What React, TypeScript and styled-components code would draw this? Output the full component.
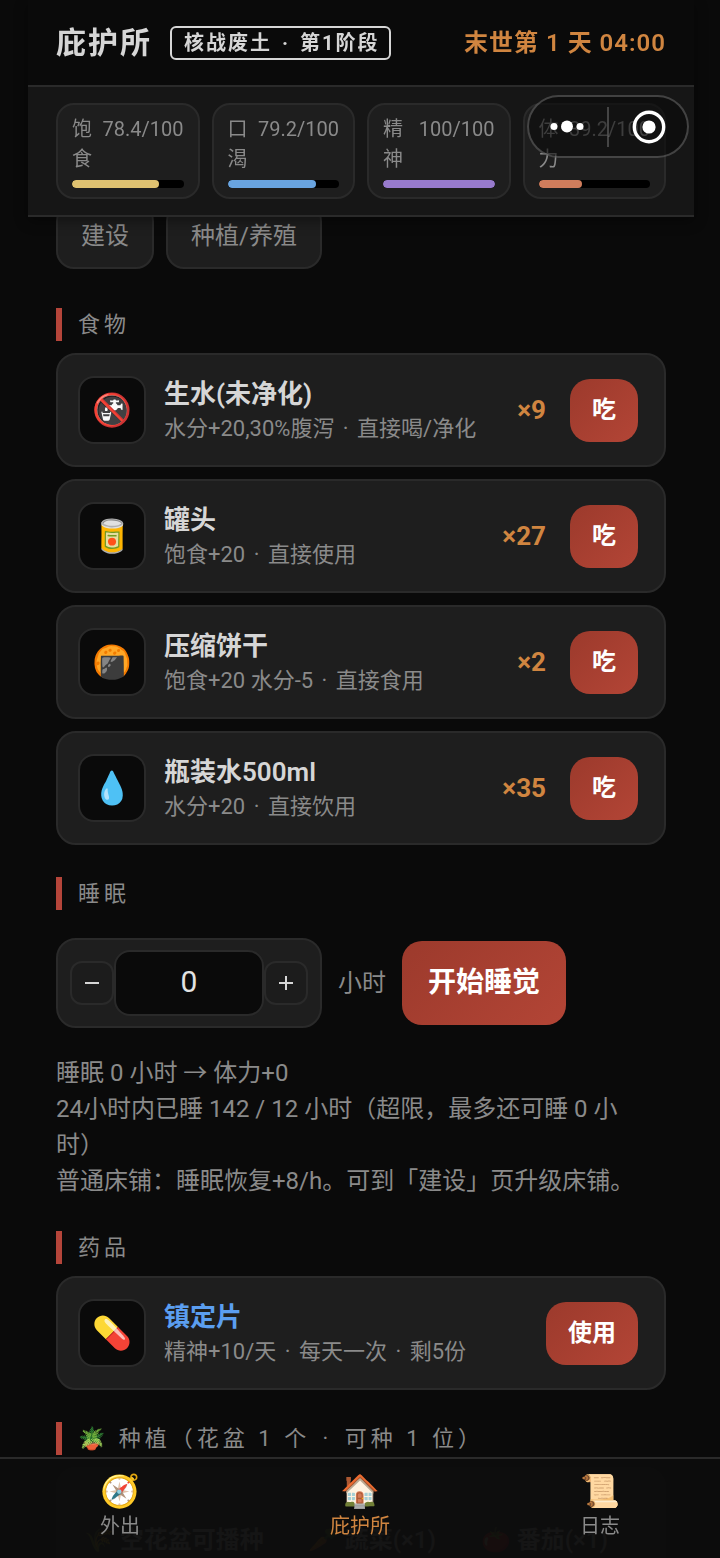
import React, { useState } from "react";
import styled, { createGlobalStyle } from "styled-components";

const GlobalStyle = createGlobalStyle`
    * {
        box-sizing: border-box;
    }

    body {
        margin: 0;
        background: #0a0a0a;
        color: #d6d6d6;
        font-family: Roboto, "Noto Sans CJK SC", "Noto Color Emoji", sans-serif;
        font-size: 24px;
        line-height: 1.5;
    }

    button, input {
        font-family: inherit;
        line-height: inherit;
        margin: 0;
    }
`;

const Screen = styled.div`
    position: relative;
    height: 100vh;
    overflow: hidden;
`;

const Page = styled.div`
    padding: 0 26px 0 28px;
`;

const Header = styled.header`
    position: sticky;
    top: 0;
    z-index: 2;
    background: #0a0a0a;
    box-shadow: 0 4px 12px rgba(0, 0, 0, 0.4);
`;

const TitleBar = styled.div`
    display: flex;
    align-items: center;
    height: 85px;
    padding: 0 28px;
`;

const Title = styled.h1`
    margin: 0;
    font-size: 30px;
    line-height: 40px;
    font-weight: 700;
    letter-spacing: 2px;
`;

const StageBadge = styled.span`
    margin-left: 18px;
    padding: 0 10px 0 12px;
    border: 2px solid #d6d6d6;
    border-radius: 6px;
    font-size: 20px;
    line-height: 30px;
    font-weight: 700;
    letter-spacing: 2px;
`;

const Clock = styled.time`
    margin-left: auto;
    color: #d08540;
    font-size: 24px;
    font-weight: 600;
    letter-spacing: 1px;
`;

const Stats = styled.div`
    display: grid;
    grid-template-columns: repeat(4, 1fr);
    gap: 12px;
    padding: 16px 28px;
    background: #161616;
    border-top: 2px solid #2a2a2a;
    border-bottom: 2px solid #2a2a2a;
`;

const StatCard = styled.div`
    padding: 9px 14px;
    background: #1e1e1e;
    border: 2px solid #2a2a2a;
    border-radius: 18px;
`;

const StatText = styled.div`
    display: flex;
    justify-content: space-between;
    color: #8a8a8a;
    font-size: 20px;
    line-height: 30px;
`;

const StatValue = styled.span`
    white-space: nowrap;
`;

const Track = styled.div`
    height: 8px;
    margin-top: 6px;
    border-radius: 4px;
    background: #000;
    overflow: hidden;
`;

const Fill = styled.div<{ $color: string }>`
    height: 100%;
    border-radius: 4px;
    background: ${({ $color }) => $color};
`;

const Content = styled.main`
    padding: 0 28px;
`;

const Tabs = styled.div`
    display: flex;
    gap: 12px;
    margin: -14px 0 39px;
`;

const Tab = styled.button`
    height: 66px;
    padding: 0 23px;
    background: #1e1e1e;
    border: 2px solid #2a2a2a;
    border-radius: 18px;
    color: #8a8a8a;
    font-size: 24px;
`;

const SectionTitle = styled.h2`
    margin: 32px 0 12px;
    padding-left: 16px;
    border-left: 6px solid #b5453a;
    color: #8a8a8a;
    font-size: 22px;
    line-height: 33px;
    font-weight: 400;
    letter-spacing: 4px;
    white-space: nowrap;
`;

const Dot = styled.span`
    margin: 0 3px;
`;

const ItemList = styled.div`
    display: flex;
    flex-direction: column;
    gap: 12px;
`;

const ItemCard = styled.div`
    display: flex;
    align-items: center;
    padding: 20px 26px 20px 20px;
    background: #1e1e1e;
    border: 2px solid #2a2a2a;
    border-radius: 20px;
`;

const ItemIcon = styled.div`
    display: flex;
    align-items: center;
    justify-content: center;
    flex: none;
    width: 68px;
    height: 68px;
    margin-right: 18px;
    background: #0a0a0a;
    border: 2px solid #2a2a2a;
    border-radius: 16px;
    font-size: 32px;
    line-height: 38px;
`;

const ItemInfo = styled.div`
    flex: 1;
    min-width: 0;
`;

const ItemName = styled.div<{ $rare?: boolean }>`
    color: ${({ $rare }) => ($rare ? "#5b9ef0" : "#d6d6d6")};
    font-size: 26px;
    line-height: 38px;
    font-weight: 600;
`;

const ItemDesc = styled.div`
    color: #8a8a8a;
    font-size: 22px;
    line-height: 32px;
    white-space: nowrap;
`;

const ItemCount = styled.span`
    color: #d08540;
    font-size: 26px;
    font-weight: 700;
`;

const ActionButton = styled.button`
    height: 63px;
    margin-left: 24px;
    padding: 0 22px;
    border: none;
    border-radius: 20px;
    background: linear-gradient(135deg, #9c3a2c, #b34536);
    color: #fff;
    font-size: 24px;
    font-weight: 600;
`;

const SleepRow = styled.div`
    display: flex;
    align-items: center;
    gap: 16px;
    margin: 28px 0 27px;
    color: #8a8a8a;
`;

const Stepper = styled.div`
    display: flex;
    align-items: center;
    padding: 10px 12px;
    background: #1e1e1e;
    border: 2px solid #2a2a2a;
    border-radius: 20px;
`;

const StepButton = styled.button`
    display: flex;
    align-items: center;
    justify-content: center;
    width: 44px;
    height: 44px;
    padding: 0;
    background: #1c1c1c;
    border: 2px solid #2a2a2a;
    border-radius: 12px;
    color: #d6d6d6;
`;

const HoursInput = styled.input`
    width: 150px;
    height: 66px;
    padding: 0 0 4px;
    background: #0a0a0a;
    border: 2px solid #2a2a2a;
    border-radius: 16px;
    color: #e2e2e2;
    font-size: 30px;
    text-align: center;
`;

const SleepButton = styled(ActionButton)`
    height: 84px;
    margin-left: 0;
    padding: 0 26px;
    font-size: 28px;
`;

const SleepNote = styled.p`
    margin: 0;
    padding-right: 24px;
    color: #8a8a8a;
    font-size: 24px;
    line-height: 36px;
`;

const PotCard = styled.div`
    display: flex;
    justify-content: space-between;
    padding: 53px 56px 53px 26px;
    background: #1e1e1e;
    border: 2px solid #2a2a2a;
    border-radius: 20px;
    line-height: 36px;
    font-weight: 600;
`;

const BottomNav = styled.nav`
    position: fixed;
    left: 0;
    right: 0;
    bottom: 0;
    z-index: 3;
    display: grid;
    grid-template-columns: repeat(3, 1fr);
    height: 101px;
    background: rgba(12, 12, 12, 0.96);
    border-top: 2px solid #2a2a2a;
`;

const NavLink = styled.a<{ $active?: boolean }>`
    display: flex;
    flex-direction: column;
    align-items: center;
    padding-top: 12px;
    color: ${({ $active }) => ($active ? "#d08540" : "#8a8a8a")};
    font-size: 20px;
    line-height: 30px;
    text-decoration: none;
`;

const NavIcon = styled.span`
    font-size: 32px;
    line-height: 40px;
`;

const Capsule = styled.div`
    position: fixed;
    top: 95px;
    right: 31px;
    z-index: 4;
    display: flex;
    width: 162px;
    height: 63px;
    background: rgba(10, 10, 10, 0.6);
    border: 2px solid rgba(255, 255, 255, 0.22);
    border-radius: 32px;
`;

const CapsuleButton = styled.button`
    display: flex;
    align-items: center;
    justify-content: center;
    flex: 1;
    padding: 0;
    background: none;
    border: none;
`;

const CapsuleDivider = styled.span`
    align-self: center;
    width: 2px;
    height: 40px;
    background: rgba(255, 255, 255, 0.22);
`;

interface Item {
    icon: string;
    name: string;
    desc: string[];
    count: number;
}

const stats = [
    { label: "饱食", value: 78.4, color: "#dfc271" },
    { label: "口渴", value: 79.2, color: "#69a4e0" },
    { label: "精神", value: 100, color: "#987bcd" },
    { label: "体力", value: 39.2, color: "#d07d5c" },
];

const foods: Item[] = [
    { icon: "🚱", name: "生水(未净化)", desc: ["水分+20,30%腹泻", "直接喝/净化"], count: 9 },
    { icon: "🥫", name: "罐头", desc: ["饱食+20", "直接使用"], count: 27 },
    { icon: "🍘", name: "压缩饼干", desc: ["饱食+20 水分-5", "直接食用"], count: 2 },
    { icon: "💧", name: "瓶装水500ml", desc: ["水分+20", "直接饮用"], count: 35 },
];

const Dotted: React.FC<{ parts: string[] }> = ({ parts }) => (
    <>
        {parts.map((part, i) => (
            <React.Fragment key={part}>
                {i > 0 && <Dot> · </Dot>}
                {part}
            </React.Fragment>
        ))}
    </>
);

const App: React.FC = () => {
    const [hours, setHours] = useState<number>(0);

    return (
        <Screen>
            <GlobalStyle />
            <Page>
                <Header>
                    <TitleBar>
                        <Title>庇护所</Title>
                        <StageBadge>
                            <Dotted parts={["核战废土", "第1阶段"]} />
                        </StageBadge>
                        <Clock>末世第 1 天 04:00</Clock>
                    </TitleBar>
                    <Stats>
                        {stats.map((stat) => (
                            <StatCard key={stat.label}>
                                <StatText>
                                    <span>{stat.label}</span>
                                    <StatValue>{stat.value}/100</StatValue>
                                </StatText>
                                <Track>
                                    <Fill $color={stat.color} style={{ width: `${stat.value}%` }} />
                                </Track>
                            </StatCard>
                        ))}
                    </Stats>
                </Header>
                <Content>
                    <Tabs>
                        <Tab>建设</Tab>
                        <Tab>种植/养殖</Tab>
                    </Tabs>

                    <SectionTitle>食物</SectionTitle>
                    <ItemList>
                        {foods.map((item) => (
                            <ItemCard key={item.name}>
                                <ItemIcon>{item.icon}</ItemIcon>
                                <ItemInfo>
                                    <ItemName>{item.name}</ItemName>
                                    <ItemDesc>
                                        <Dotted parts={item.desc} />
                                    </ItemDesc>
                                </ItemInfo>
                                <ItemCount>×{item.count}</ItemCount>
                                <ActionButton>吃</ActionButton>
                            </ItemCard>
                        ))}
                    </ItemList>

                    <SectionTitle>睡眠</SectionTitle>
                    <SleepRow>
                        <Stepper>
                            <StepButton aria-label="减少" onClick={() => setHours(Math.max(0, hours - 1))}>
                                <svg width="16" height="16" viewBox="0 0 16 16" stroke="currentColor" strokeWidth="2">
                                    <path d="M1 8h14" />
                                </svg>
                            </StepButton>
                            <HoursInput
                                id="hours"
                                value={hours}
                                onChange={(e) => setHours(Number(e.target.value) || 0)}
                            />
                            <StepButton aria-label="增加" onClick={() => setHours(hours + 1)}>
                                <svg width="16" height="16" viewBox="0 0 16 16" stroke="currentColor" strokeWidth="2">
                                    <path d="M1 8h14M8 1v14" />
                                </svg>
                            </StepButton>
                        </Stepper>
                        <label htmlFor="hours">小时</label>
                        <SleepButton>开始睡觉</SleepButton>
                    </SleepRow>
                    <SleepNote>睡眠 {hours} 小时 → 体力+{hours * 8}</SleepNote>
                    <SleepNote>24小时内已睡 142 / 12 小时（超限，最多还可睡 0 小时）</SleepNote>
                    <SleepNote>普通床铺：睡眠恢复+8/h。可到「建设」页升级床铺。</SleepNote>

                    <SectionTitle>药品</SectionTitle>
                    <ItemCard>
                        <ItemIcon>💊</ItemIcon>
                        <ItemInfo>
                            <ItemName $rare>镇定片</ItemName>
                            <ItemDesc>
                                <Dotted parts={["精神+10/天", "每天一次", "剩5份"]} />
                            </ItemDesc>
                        </ItemInfo>
                        <ActionButton>使用</ActionButton>
                    </ItemCard>

                    <SectionTitle>
                        <Dotted parts={["🪴 种植（花盆 1 个", "可种 1 位）"]} />
                    </SectionTitle>
                    <PotCard>
                        <span>🌾 空花盆可播种</span>
                        <span>🥕 蔬菜(×1)</span>
                        <span>🍅 番茄(×1)</span>
                    </PotCard>
                </Content>
            </Page>

            <Capsule>
                <CapsuleButton aria-label="更多">
                    <svg width="36" height="14" viewBox="0 0 36 14" fill="#fff">
                        <circle cx="4" cy="6.5" r="3.5" />
                        <circle cx="17" cy="6.5" r="6" />
                        <circle cx="30" cy="6.5" r="3.5" />
                    </svg>
                </CapsuleButton>
                <CapsuleDivider />
                <CapsuleButton aria-label="关闭">
                    <svg width="36" height="34" viewBox="0 0 36 34">
                        <circle cx="19" cy="17" r="14.7" fill="none" stroke="#fff" strokeWidth="3.4" />
                        <circle cx="19" cy="17" r="6.6" fill="#fff" />
                    </svg>
                </CapsuleButton>
            </Capsule>

            <BottomNav>
                <NavLink href="#explore">
                    <NavIcon>🧭</NavIcon>
                    外出
                </NavLink>
                <NavLink href="#shelter" $active>
                    <NavIcon>🏠</NavIcon>
                    庇护所
                </NavLink>
                <NavLink href="#log">
                    <NavIcon>📜</NavIcon>
                    日志
                </NavLink>
            </BottomNav>
        </Screen>
    );
};

export default App;
